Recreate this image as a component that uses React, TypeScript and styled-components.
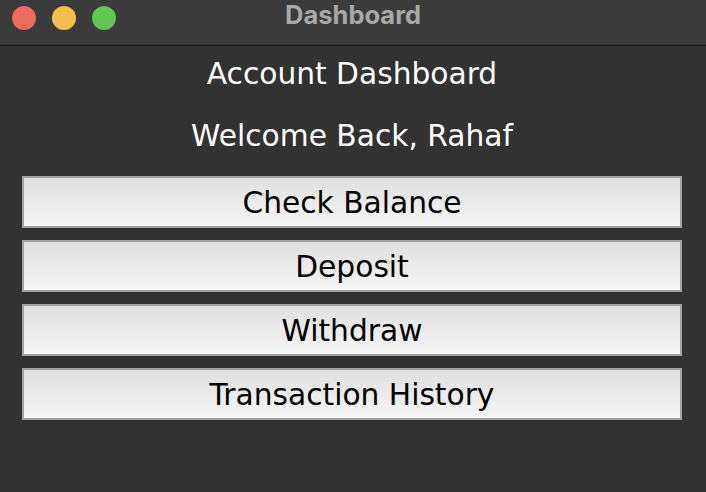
import React from "react";
import styled, { createGlobalStyle } from "styled-components";

const Global = createGlobalStyle`
  html, body { margin: 0; padding: 0; background: #323232; }
  body { width: 706px; height: 492px; overflow: hidden; }
`;

const Window = styled.div`
  width: 706px;
  height: 492px;
  display: flex;
  flex-direction: column;
  background: #323232;
  font-family: "DejaVu Sans", sans-serif;
`;

const TitleBar = styled.div`
  position: relative;
  height: 45px;
  flex: none;
  background: #3b3b3b;
  border-bottom: 1px solid #0e0e0e;
  display: flex;
  align-items: center;
  justify-content: center;
`;

const Lights = styled.div`
  position: absolute;
  left: 12px;
  top: 6px;
  display: flex;
  gap: 16px;
`;

const Light = styled.span<{ $c: string }>`
  width: 24px;
  height: 24px;
  border-radius: 50%;
  background: ${(p) => p.$c};
`;

const WindowTitle = styled.div`
  font-family: Inter, "Liberation Sans", sans-serif;
  font-weight: 700;
  font-size: 25.5px;
  color: #a8a8a8;
  margin-top: -16px;
`;

const Content = styled.div`
  display: flex;
  flex-direction: column;
  align-items: stretch;
  padding: 0 24px 0 22px;
`;

const Heading = styled.div`
  color: #ffffff;
  font-size: 29.7px;
  text-align: center;
  line-height: 36px;
  margin-top: 10px;
`;

const Welcome = styled(Heading)`
  margin-top: 26px;
`;

const Buttons = styled.div`
  display: flex;
  flex-direction: column;
  gap: 12px;
  margin-top: 22px;
`;

const Button = styled.button`
  height: 52px;
  box-sizing: border-box;
  border: 2px solid #a3a3a3;
  background: linear-gradient(to bottom, #dfdfdf, #f6f6f6);
  color: #000;
  font-family: "DejaVu Sans", sans-serif;
  font-size: 29.7px;
  padding: 0;
  display: flex;
  align-items: center;
  justify-content: center;
`;

export default function App() {
  return (
    <>
      <Global />
      <Window>
        <TitleBar>
          <Lights>
            <Light $c="#ee6a5f" />
            <Light $c="#f5be4f" />
            <Light $c="#62c554" />
          </Lights>
          <WindowTitle>Dashboard</WindowTitle>
        </TitleBar>
        <Content>
          <Heading>Account Dashboard</Heading>
          <Welcome>Welcome Back, Rahaf</Welcome>
          <Buttons>
            <Button>Check Balance</Button>
            <Button>Deposit</Button>
            <Button>Withdraw</Button>
            <Button>Transaction History</Button>
          </Buttons>
        </Content>
      </Window>
    </>
  );
}
